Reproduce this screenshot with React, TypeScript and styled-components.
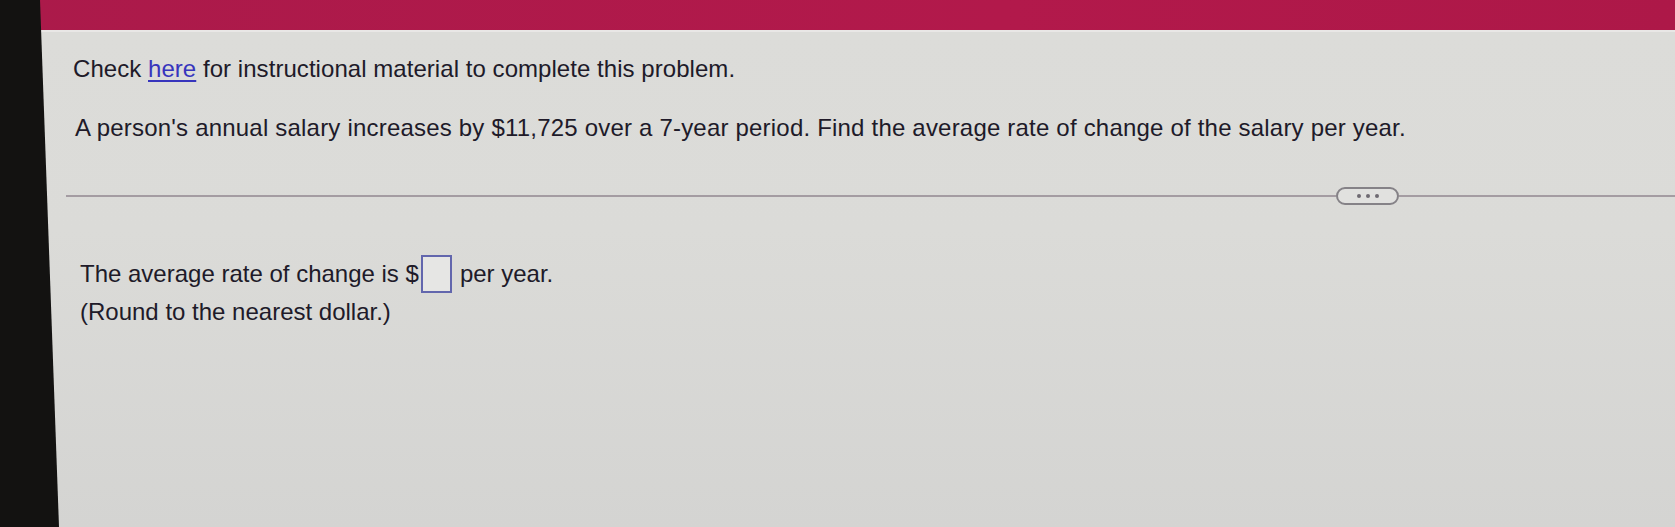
import styled, {createGlobalStyle} from "styled-components";

const GlobalStyle = createGlobalStyle`
  html, body {
    margin: 0;
    padding: 0;
    background: #111;
  }
  body {
    font-family: "Liberation Sans", Arial, sans-serif;
  }
`;

const Page = styled.div`
  position: relative;
  width: 1675px;
  height: 527px;
  overflow: hidden;
`;

// dark monitor edge on the left, slightly tilted in the photo
const Bezel = styled.div`
  position: absolute;
  left: 0;
  top: 0;
  width: 62px;
  height: 100%;
  background: #131211;
  clip-path: polygon(0 0, 40px 0, 59px 100%, 0 100%);
`;

const Screen = styled.div`
  display: flex;
  flex-direction: column;
  height: 100%;
`;

const TopBar = styled.div`
  height: 30px;
  background: linear-gradient(90deg, #ab1a4a 0%, #b2194b 60%, #ad1848 100%);
`;

const Content = styled.div`
  flex: 1;
  background: linear-gradient(180deg, #dcdcd9 0%, #dbdbd8 40%, #d4d4d2 100%);
  border-top: 2px solid #e9e7e6;
  padding-top: 23px;
  color: #201a29;
  font-size: 24px;
`;

const Intro = styled.p`
  margin: 0 0 0 73px;
  line-height: 28px;
  letter-spacing: 0.05px;
`;

const Link = styled.a`
  color: #3735bd;
  text-decoration: underline;
  text-decoration-thickness: 2px;
  text-underline-offset: 3px;
`;

const Question = styled.p`
  margin: 31px 0 0 75px;
  line-height: 28px;
  letter-spacing: 0.2px;
`;

const Divider = styled.div`
  display: flex;
  align-items: center;
  margin: 45px 0 0 66px;
`;

const Line = styled.div<{$grow?: boolean}>`
  height: 2px;
  background: #a49ca2;
  flex: ${p => (p.$grow ? 1 : "none")};
  width: ${p => (p.$grow ? "auto" : "1270px")};
`;

const MoreButton = styled.button`
  display: flex;
  align-items: center;
  justify-content: center;
  gap: 5px;
  width: 63px;
  height: 18px;
  padding: 0;
  border: 2px solid #858287;
  border-radius: 9px;
  background: #e1e1df;
`;

const Dot = styled.span`
  width: 4px;
  height: 4px;
  border-radius: 50%;
  background: #6e6a72;
`;

const Answer = styled.div`
  margin: 50px 0 0 80px;
`;

const AnswerRow = styled.div`
  display: flex;
  align-items: center;
  line-height: 38px;
`;

const Blank = styled.span`
  display: inline-block;
  box-sizing: border-box;
  width: 31px;
  height: 38px;
  margin: 0 8px 0 2px;
  border: 2px solid #6266ad;
  background: #e6e6e4;
`;

const Hint = styled.div`
  margin-top: 5px;
  line-height: 28px;
`;

export default function App() {
  return (
    <>
      <GlobalStyle />
      <Page>
        <Screen>
          <TopBar />
          <Content>
            <Intro>
              Check <Link href="#">here</Link> for instructional material to complete this problem.
            </Intro>
            <Question>
              A person's annual salary increases by $11,725 over a 7-year period. Find the average rate of change of the salary per year.
            </Question>
            <Divider>
              <Line />
              <MoreButton aria-label="More">
                <Dot />
                <Dot />
                <Dot />
              </MoreButton>
              <Line $grow />
            </Divider>
            <Answer>
              <AnswerRow>
                The average rate of change is $<Blank />per year.
              </AnswerRow>
              <Hint>(Round to the nearest dollar.)</Hint>
            </Answer>
          </Content>
        </Screen>
        <Bezel />
      </Page>
    </>
  );
}
